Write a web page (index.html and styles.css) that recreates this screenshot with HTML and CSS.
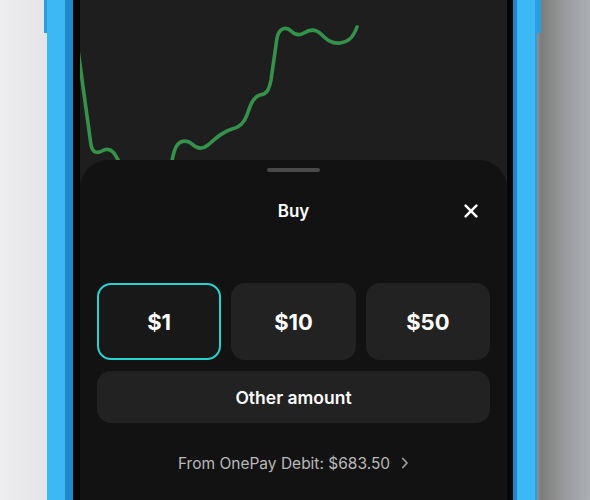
FILE: index.html
```html
<!DOCTYPE html>
<html lang="en">
<head>
<meta charset="utf-8">
<title>Buy</title>
<link rel="stylesheet" href="styles.css">
</head>
<body>
<div class="stage">
  <div class="phone">
    <div class="bezel">
      <div class="screen">
        <svg class="chart" width="427" height="160" viewBox="0 0 427 160">
          <path d="M -2 50 L 11 145 C 13 154, 18 153, 22 151 C 27 148, 30 149, 33 152 C 36 155, 38 160, 40 164 L 60 190 L 88 190 C 90 170, 92 155, 96 147 C 99 141, 106 139, 112 144 C 117 149, 122 150, 128 145 C 137 137, 144 131, 152 129 C 160 127, 164 123, 167 115 C 170 106, 173 97, 180 95 C 187 94, 189 90, 191 80 L 197 38 C 199 28, 206 26, 211 31 C 215 35, 219 36, 224 33 C 230 29, 236 29, 241 34 C 247 40, 252 44, 260 43 C 268 42, 273 38, 277 27" fill="none" stroke="#34924b" stroke-width="3.6" stroke-linecap="round" stroke-linejoin="round"/>
        </svg>
        <div class="sheet">
          <div class="handle"></div>
          <div class="header">
            <span></span>
            <span class="title">Buy</span>
            <button class="close" aria-label="Close">
              <svg width="14" height="14" viewBox="0 0 14 14"><path d="M1.6 1.6 L12.4 12.4 M12.4 1.6 L1.6 12.4" stroke="#fff" stroke-width="2.5" stroke-linecap="round"/></svg>
            </button>
          </div>
          <div class="amounts">
            <button class="amount selected">$1</button>
            <button class="amount">$10</button>
            <button class="amount">$50</button>
          </div>
          <button class="other">Other amount</button>
          <div class="source">
            <span>From OnePay Debit: $683.50</span>
            <svg width="8" height="12" viewBox="0 0 8 12"><path d="M1.8 1.5 L6 6 L1.8 10.5" fill="none" stroke="#9a9a9a" stroke-width="1.8" stroke-linecap="round" stroke-linejoin="round"/></svg>
          </div>
        </div>
      </div>
    </div>
  </div>
</div>
</body>
</html>
```
FILE: styles.css
```css
* { box-sizing: border-box; }
html, body { margin: 0; padding: 0; }
body {
  width: 590px;
  height: 500px;
  overflow: hidden;
  font-family: Inter, "Liberation Sans", sans-serif;
  background: linear-gradient(90deg, #ededef 0px, #e5e5e7 46px, #e5e5e7 520px, #7c7c7c 541px, #989a9c 565px, #abb0b6 590px);
}
.stage {
  display: flex;
  height: 500px;
}
.phone {
  position: relative;
  margin-left: 47px;
  width: 490px;
  height: 500px;
  background: #3cb9f4;
  padding: 0 18px 0 18px;
  border-right: 2px solid #2b9fe2;
}
.phone::before,
.phone::after {
  content: "";
  position: absolute;
  top: 0;
  height: 33px;
  background: #2a9ddf;
}
.phone::before { left: -3px; width: 3px; }
.phone::after { right: -6px; width: 4px; }
.bezel {
  height: 100%;
  background: #060606;
  border-left: 8px solid #1f86c9;
  border-right: 4px solid #1f86c9;
  padding: 0 6px 0 7px;
}
.screen {
  height: 100%;
  background: #1e1e1e;
  display: flex;
  flex-direction: column;
}
.chart {
  display: block;
  flex: none;
}
.sheet {
  flex: 1;
  background: #121212;
  border-radius: 28px 28px 0 0;
  padding: 0 17px;
  display: flex;
  flex-direction: column;
}
.handle {
  margin: 8px auto 0;
  width: 53px;
  height: 4px;
  border-radius: 2px;
  background: #4a4a4a;
}
.header {
  margin-top: 18px;
  height: 42px;
  display: grid;
  grid-template-columns: 1fr auto 1fr;
  align-items: center;
}
.title {
  color: #fff;
  font-size: 17px;
  font-weight: 600;
}
.close {
  justify-self: end;
  margin-right: 12px;
  padding: 0;
  border: 0;
  background: none;
  width: 14px;
  height: 14px;
  display: flex;
}
.amounts {
  margin-top: 51px;
  display: grid;
  grid-template-columns: 1fr 1fr 1fr;
  gap: 10px;
  height: 77px;
}
.amount {
  border: 0;
  border-radius: 14px;
  background: #222222;
  color: #fff;
  font-family: inherit;
  font-size: 22px;
  font-weight: 700;
}
.amount.selected {
  background: #181818;
  border: 2.5px solid #26d3d0;
}
.other {
  margin-top: 11px;
  height: 52px;
  border: 0;
  border-radius: 14px;
  background: #222222;
  color: #fff;
  font-family: inherit;
  font-size: 17.5px;
  font-weight: 600;
}
.source {
  margin-top: 30px;
  height: 20px;
  display: flex;
  justify-content: center;
  align-items: center;
  gap: 11px;
  color: #b9b9b9;
  font-size: 15.5px;
}
```
